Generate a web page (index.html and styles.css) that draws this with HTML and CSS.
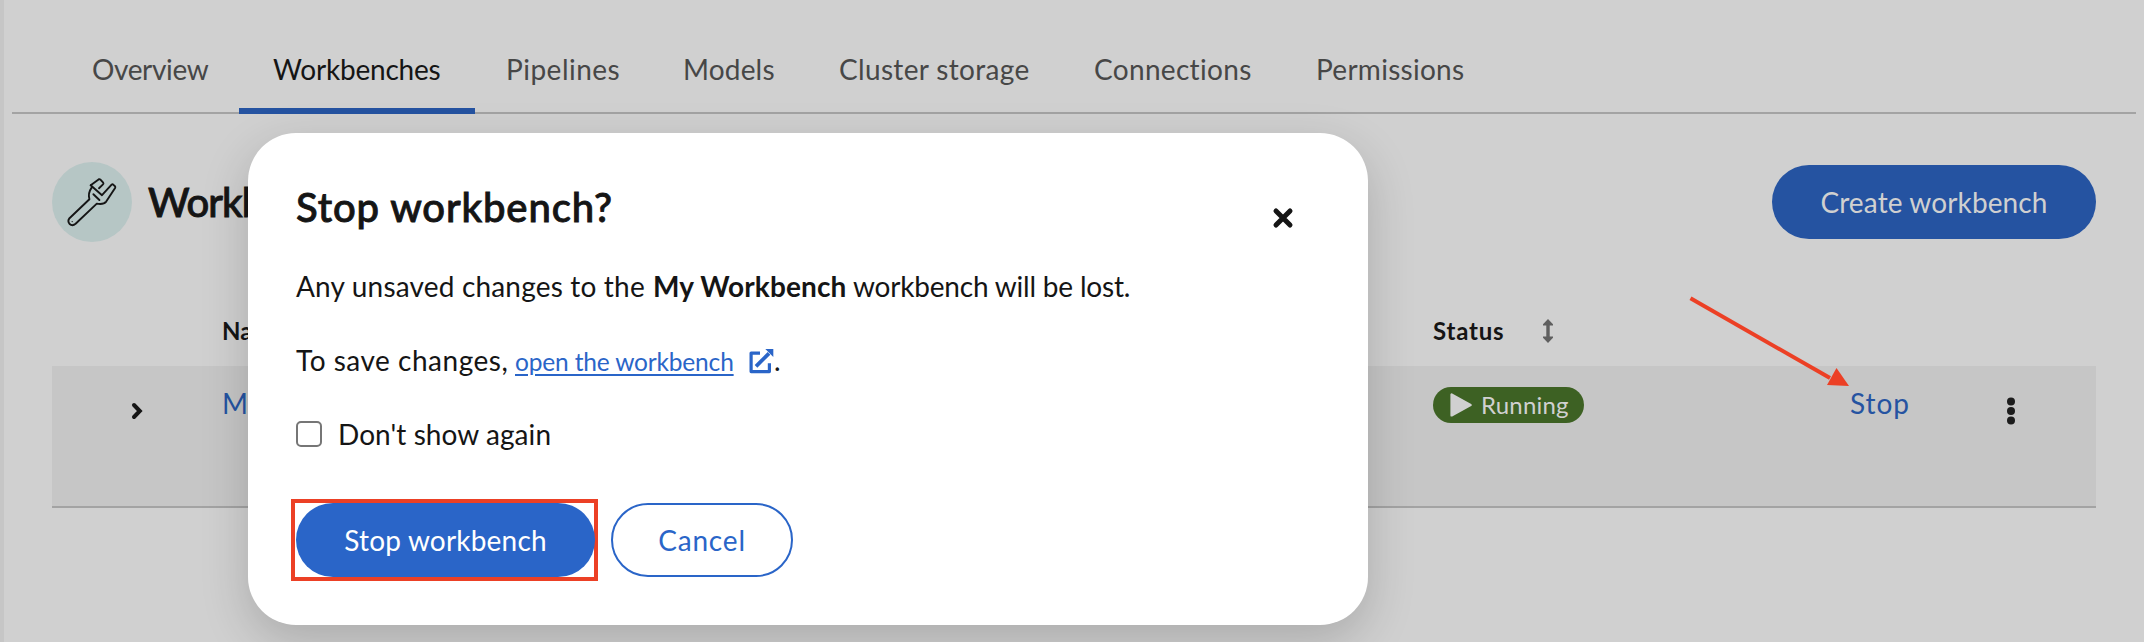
FILE: index.html
```html
<!DOCTYPE html>
<html lang="en">
<head>
<meta charset="utf-8">
<title>Workbenches</title>
<link rel="stylesheet" href="styles.css">
</head>
<body>
<main class="page">
  <nav class="tabs">
    <a class="tab t-overview">Overview</a>
    <a class="tab t-workbenches active">Workbenches</a>
    <a class="tab t-pipelines">Pipelines</a>
    <a class="tab t-models">Models</a>
    <a class="tab t-storage">Cluster storage</a>
    <a class="tab t-connections">Connections</a>
    <a class="tab t-permissions">Permissions</a>
  </nav>
  <section class="content">
    <header class="section-head">
      <span class="section-icon">
        <svg width="64" height="64" viewBox="0 0 64 64" fill="none" stroke="#151515" stroke-width="1.9" stroke-linejoin="round" stroke-linecap="round">
          <path d="M30.7 15.3 38.9 9.2Q39.6 8.9 40.2 9.4L43.2 12.7Q43.8 13.6 43 14.4L39 18.2"/>
          <path d="M30.7 15.3 42 25.2 51.6 14.7Q52.4 14 53.2 14.6L55 16.2Q55.6 17 55.1 18L46.2 31.6Q43.6 34.8 36.8 33.6L15.6 53.8Q12.4 56.4 9.6 54 7.2 51.2 9.5 48.2L29.4 29.2Q27.6 23.4 31.8 17.4"/>
          <path d="M33.4 24.2 39.4 30"/>
          <circle cx="12.2" cy="51.6" r=".7" fill="#151515" stroke="none"/>
        </svg>
      </span>
      <h1 class="section-title">Workbenches</h1>
      <button class="btn primary create">Create workbench</button>
    </header>
    <div class="table">
      <div class="row head">
        <span></span>
        <span class="th">Name</span>
        <span class="th status">Status
          <svg class="sort" width="12" height="26" viewBox="0 0 12 26" fill="#5f5f5f"><path d="M6 1 11 6.2V7.6H7.7V18.4H11V19.8L6 25 1 19.8V18.4H4.3V7.6H1V6.2Z" /></svg>
        </span>
      </div>
      <div class="row body">
        <svg class="expand" width="14" height="20" viewBox="0 0 14 20" fill="none" stroke="#151515" stroke-width="4" stroke-linecap="round" stroke-linejoin="miter"><path d="M4 4 9.8 10 4 16"/></svg>
        <a class="link">My</a>
        <span class="badge">
          <svg width="24" height="26" viewBox="0 0 24 26" fill="#d0d0d0" stroke="#d0d0d0" stroke-width="2.4" stroke-linejoin="round"><path d="M2.6 2.6V23.4L21.6 13Z"/></svg>
          Running
        </span>
        <a class="link stop">Stop</a>
        <svg class="kebab" width="8" height="28" viewBox="0 0 8 28" fill="#1c1c1c"><circle cx="4" cy="4.4" r="4"/><circle cx="4" cy="14" r="4"/><circle cx="4" cy="23.6" r="4"/></svg>
      </div>
    </div>
  </section>
</main>

<svg class="arrow" width="170" height="100" viewBox="0 0 170 100"><path d="M10.5 8.3 150 88" stroke="#ec4025" stroke-width="4"/><path d="M156.5 78 147 95 169 96Z" fill="#ec4025"/></svg>

<div class="modal" role="dialog">
  <header class="modal-head">
    <h2 class="modal-title">Stop workbench?</h2>
    <svg class="close" width="22" height="22" viewBox="0 0 22 22" stroke="#151515" stroke-width="5" stroke-linecap="round"><path d="M4 4 18 18M18 4 4 18"/></svg>
  </header>
  <p class="line"><span class="p1">Any unsaved changes to the</span><b>My Workbench</b><span class="p2">workbench will be lost.</span></p>
  <p class="line second"><span class="save">To save changes,</span><a class="open">open the workbench</a><svg class="ext" width="25" height="26" viewBox="0 0 25 26" fill="none" stroke="#2a65c8" stroke-width="3.2"><path d="M11 5.1H2.1V23.6H20.4V15.2" stroke-linejoin="round"/><path d="M7 18.4 20 5.4" stroke-width="3.8"/><path d="M16.3 1H24.3V9Z" fill="#2a65c8" stroke="none"/></svg><span>.</span></p>
  <label class="check"><span class="box"></span>Don't show again</label>
  <footer class="actions">
    <span class="callout"><button class="btn primary stopwb">Stop workbench</button></span>
    <button class="btn outline">Cancel</button>
  </footer>
</div>
</body>
</html>
```
FILE: styles.css
```css
* { box-sizing: border-box; margin: 0; padding: 0; }
body {
  width: 2144px;
  height: 642px;
  overflow: hidden;
  position: relative;
  background: #d0d0d0;
  border-left: 4px solid #c6c6c6;
  color: #151515;
  font: 28px/40px Lato, "Liberation Sans", sans-serif;
}
.page { margin-left: -4px; }
svg { display: block; flex: none; }

.tabs {
  display: grid;
  grid-template-columns: 227px 236px 177px 155px 255px 222px 1fr;
  height: 114px;
  margin: 0 8px 0 12px;
  background: linear-gradient(#a3a3a3, #a3a3a3) bottom / 100% 2px no-repeat;
}
.tab { padding: 49px 0 0 31px; color: #474747; white-space: nowrap; }
.tab.active { color: #151515; border-bottom: 6px solid #2553a1; padding-left: 34px; }
.t-overview { padding-left: 80px; letter-spacing: -.36px; }
.t-workbenches { letter-spacing: -.2px; }
.t-pipelines { letter-spacing: .49px; }
.t-models { letter-spacing: .18px; }
.t-storage { letter-spacing: .33px; padding-left: 32px; }
.t-connections { letter-spacing: .32px; padding-left: 32px; }
.t-permissions { letter-spacing: .27px; padding-left: 32px; }

.content { padding: 48px 48px 0 52px; }
.section-head { display: flex; align-items: center; height: 80px; }
.section-icon {
  width: 80px;
  height: 80px;
  border-radius: 50%;
  background: #b6c6c5;
  padding: 8px;
}
.section-title {
  flex: 1;
  margin-left: 16px;
  font-size: 40px;
  font-weight: 500;
  line-height: 48px;
  letter-spacing: -.9px;
  -webkit-text-stroke: .9px #151515;
}
.btn {
  height: 74px;
  border: 0;
  border-radius: 37px;
  font: inherit;
  white-space: nowrap;
}
.primary { background: #2a65c8; color: #fff; letter-spacing: .19px; }
.create { width: 324px; background: #2553a1; color: #d0d0d0; letter-spacing: .12px; }

.table { margin-top: 64px; }
.row { display: grid; grid-template-columns: 170px 1211px 416px 148px 1fr; align-items: start; }
.head { height: 60px; padding-top: 5px; }
.th { font-size: 24px; font-weight: 700; line-height: 40px; }
.status { display: flex; align-items: center; gap: 38px; letter-spacing: .8px; }
.body {
  height: 142px;
  background: #c6c6c6;
  border-bottom: 2px solid #a3a3a3;
}
.expand { margin: 35px 0 0 78px; }
.link { color: #2553a1; padding-top: 17px; }
.stop { letter-spacing: .97px; padding-left: 1px; }
.badge {
  display: flex;
  align-items: center;
  gap: 8px;
  width: 151px;
  height: 36px;
  margin-top: 21px;
  padding-left: 16px;
  border-radius: 18px;
  background: #3d6123;
  color: #d0d0d0;
  font-size: 24px;
  letter-spacing: .19px;
}
.kebab { margin: 31px 0 0 10px; }

/* Annotation lying over the table */
.arrow { position: absolute; left: 1676px; top: 290px; }

.modal {
  position: absolute;
  left: 244px;
  top: 133px;
  width: 1120px;
  height: 492px;
  border-radius: 48px;
  padding: 47px 74px 0 48px;
  background: #fff;
  box-shadow: 0 16px 48px rgba(0, 0, 0, .18);
}
.modal-head { display: flex; justify-content: space-between; height: 86px; }
.modal-title {
  padding-top: 1px;
  font-size: 40px;
  font-weight: 500;
  line-height: 52px;
  letter-spacing: .88px;
  -webkit-text-stroke: .9px #151515;
}
.close { margin-top: 27px; }
.line { display: flex; white-space: nowrap; height: 74px; }
.line .p1 { width: 357px; letter-spacing: .18px; }
.line b { width: 200px; letter-spacing: .12px; }
.line .p2 { letter-spacing: -.2px; }
.save { width: 219px; letter-spacing: .52px; }
.open {
  width: 218px;
  height: 36px;
  color: #2a65c8;
  font-size: 24.5px;
  line-height: 43px;
  letter-spacing: -.17px;
  text-decoration: underline;
  text-decoration-thickness: 2px;
  text-underline-offset: 3px;
}
.ext { margin: 8px 0 0 16px; }
.check { display: flex; align-items: center; height: 40px; letter-spacing: .07px; }
.box {
  width: 26px;
  height: 26px;
  margin-right: 16px;
  border: 2px solid #767676;
  border-radius: 5px;
  background: #fff;
}
.actions { display: flex; align-items: center; gap: 13px; margin: 45px 0 0 -5px; }
.callout { width: 307px; height: 82px; border: 4px solid #ec4025; padding-left: 1px; }
.stopwb { width: 299px; display: block; }
.outline {
  width: 182px;
  background: #fff;
  border: 2px solid #2a65c8;
  color: #2a65c8;
  letter-spacing: .81px;
}
```
